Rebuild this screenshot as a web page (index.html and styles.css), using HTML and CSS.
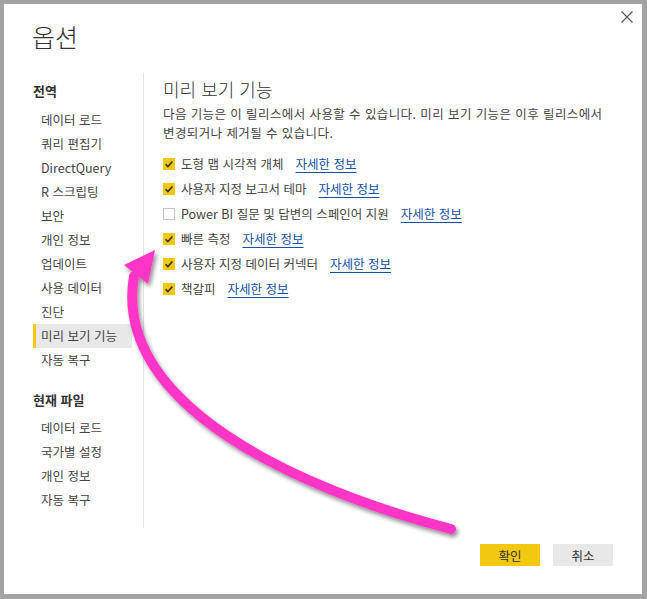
FILE: index.html
```html
<!DOCTYPE html>
<html lang="ko">
<head>
<meta charset="utf-8">
<title>옵션</title>
<link rel="stylesheet" href="styles.css">
</head>
<body>
<div class="dialog">
  <button class="close" aria-label="닫기">
    <svg width="12" height="12" viewBox="0 0 12 12"><path d="M0.5 0.5 L11.5 11.5 M11.5 0.5 L0.5 11.5" stroke="#555" stroke-width="1.1" fill="none"/></svg>
  </button>
  <h1 class="title">옵션</h1>
  <div class="main">
    <nav class="nav">
      <div class="nav-head">전역</div>
      <div class="nav-item">데이터 로드</div>
      <div class="nav-item">쿼리 편집기</div>
      <div class="nav-item">DirectQuery</div>
      <div class="nav-item">R 스크립팅</div>
      <div class="nav-item">보안</div>
      <div class="nav-item">개인 정보</div>
      <div class="nav-item">업데이트</div>
      <div class="nav-item">사용 데이터</div>
      <div class="nav-item">진단</div>
      <div class="nav-item selected">미리 보기 기능</div>
      <div class="nav-item">자동 복구</div>
      <div class="nav-head second">현재 파일</div>
      <div class="nav-item">데이터 로드</div>
      <div class="nav-item">국가별 설정</div>
      <div class="nav-item">개인 정보</div>
      <div class="nav-item">자동 복구</div>
    </nav>
    <section class="content">
      <h2 class="heading">미리 보기 기능</h2>
      <p class="desc">다음 기능은 이 릴리스에서 사용할 수 있습니다. 미리 보기 기능은 이후 릴리스에서 변경되거나 제거될 수 있습니다.</p>
      <ul class="features">
        <li class="row"><span class="box checked"><svg width="12" height="12" viewBox="0 0 12 12"><path d="M2.6 6.2 L4.9 8.6 L9.4 3.4" stroke="#333" stroke-width="1.6" fill="none"/></svg></span><span class="label">도형 맵 시각적 개체</span><a class="link" href="#">자세한 정보</a></li>
        <li class="row"><span class="box checked"><svg width="12" height="12" viewBox="0 0 12 12"><path d="M2.6 6.2 L4.9 8.6 L9.4 3.4" stroke="#333" stroke-width="1.6" fill="none"/></svg></span><span class="label">사용자 지정 보고서 테마</span><a class="link" href="#">자세한 정보</a></li>
        <li class="row"><span class="box"></span><span class="label">Power BI 질문 및 답변의 스페인어 지원</span><a class="link" href="#">자세한 정보</a></li>
        <li class="row"><span class="box checked"><svg width="12" height="12" viewBox="0 0 12 12"><path d="M2.6 6.2 L4.9 8.6 L9.4 3.4" stroke="#333" stroke-width="1.6" fill="none"/></svg></span><span class="label">빠른 측정</span><a class="link" href="#">자세한 정보</a></li>
        <li class="row"><span class="box checked"><svg width="12" height="12" viewBox="0 0 12 12"><path d="M2.6 6.2 L4.9 8.6 L9.4 3.4" stroke="#333" stroke-width="1.6" fill="none"/></svg></span><span class="label">사용자 지정 데이터 커넥터</span><a class="link" href="#">자세한 정보</a></li>
        <li class="row"><span class="box checked"><svg width="12" height="12" viewBox="0 0 12 12"><path d="M2.6 6.2 L4.9 8.6 L9.4 3.4" stroke="#333" stroke-width="1.6" fill="none"/></svg></span><span class="label">책갈피</span><a class="link" href="#">자세한 정보</a></li>
      </ul>
    </section>
  </div>
  <div class="footer">
    <button class="btn primary">확인</button>
    <button class="btn">취소</button>
  </div>
</div>
<svg class="arrow" width="647" height="599" viewBox="0 0 647 599">
  <defs>
    <filter id="sh" x="-20%" y="-20%" width="140%" height="140%">
      <feDropShadow dx="2" dy="3" stdDeviation="2" flood-color="#000" flood-opacity="0.45"/>
    </filter>
  </defs>
  <g filter="url(#sh)">
    <path d="M451 529 C300 490 112 405 134 276" stroke="#ff36c8" stroke-width="10" stroke-linecap="round" fill="none"/>
    <polygon points="124,265 155,250 148,284" fill="#ff36c8"/>
  </g>
</svg>
</body>
</html>
```
FILE: styles.css
```css
* { box-sizing: border-box; }
html, body { margin: 0; padding: 0; }
body {
  width: 647px;
  height: 599px;
  background: #a3a3a3;
  font-family: "Noto Sans CJK KR", "Noto Sans", sans-serif;
  color: #333;
  position: relative;
  overflow: hidden;
}
.dialog {
  position: relative;
  margin: 4px 0 0 4px;
  width: 638px;
  height: 590px;
  background: #fff;
  display: flex;
  flex-direction: column;
}
.close {
  position: absolute;
  top: 7px;
  right: 9px;
  width: 12px;
  height: 12px;
  padding: 0;
  border: 0;
  background: none;
  display: flex;
}
.title {
  margin: 16px 0 21px 28px;
  font-size: 25px;
  line-height: 32px;
  font-weight: 300;
  color: #333;
}
.main {
  display: flex;
  height: 455px;
}
.nav {
  width: 140px;
  padding: 6px 11px 0 29px;
  border-right: 1px solid #e3e3e3;
  flex: none;
}
.nav-head {
  font-size: 13px;
  font-weight: 700;
  line-height: 24px;
  height: 24px;
  margin-bottom: 5px;
  color: #333;
}
.nav-head.second { margin-top: 16px; margin-bottom: 4px; }
.nav-item {
  font-size: 12.5px;
  line-height: 24px;
  height: 24px;
  color: #444;
  white-space: nowrap;
  border-left: 3px solid transparent;
  padding-left: 5px;
}
.nav-item.selected {
  background: #e8e8e8;
  border-left-color: #f2c811;
}
.content {
  padding: 4px 0 0 19px;
  flex: 1;
}
.heading {
  margin: 0;
  font-size: 18px;
  line-height: 24px;
  font-weight: 300;
  color: #333;
}
.desc {
  margin: 3px 0 0;
  font-size: 12.5px;
  line-height: 19px;
  color: #444;
  width: 445px;
  word-break: keep-all;
  letter-spacing: 0.4px;
}
.features {
  list-style: none;
  margin: 9px 0 0;
  padding: 0;
}
.row {
  height: 25px;
  display: flex;
  align-items: center;
  font-size: 12.5px;
  color: #444;
}
.box {
  width: 12px;
  height: 12px;
  border: 1px solid #c4c4c4;
  background: #fff;
  flex: none;
  margin-right: 6px;
  display: flex;
}
.box.checked {
  background: #f2c811;
  border: 0;
}
.label { margin-right: 12px; }
.link {
  color: #1450a8;
  text-decoration: underline;
  text-underline-offset: 3px;
}
.footer {
  display: flex;
  justify-content: flex-end;
  gap: 13px;
  padding: 16px 29px 0 0;
}
.btn {
  width: 60px;
  height: 22px;
  border: 0;
  padding: 0;
  font-family: inherit;
  font-size: 12.5px;
  color: #333;
  background: #e8e8e8;
}
.btn.primary { background: #f2c811; }
.arrow {
  position: absolute;
  left: 0;
  top: 0;
  pointer-events: none;
}
```
